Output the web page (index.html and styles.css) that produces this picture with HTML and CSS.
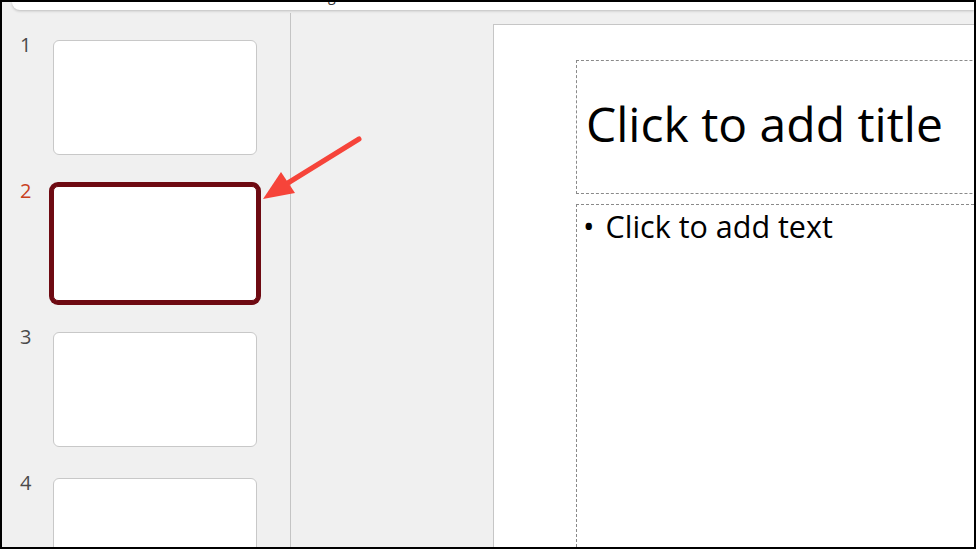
FILE: index.html
```html
<html>
<head>
<meta charset="utf-8">
<link rel="stylesheet" href="styles.css">
</head>
<body>
<div class="app">
  <div class="ribbon">
    <span class="ribbon-text">Recording</span>
  </div>
  <div class="workspace">
    <div class="thumbs">
      <div class="slide-row">
        <span class="num">1</span>
        <div class="thumb"></div>
      </div>
      <div class="slide-row active">
        <span class="num">2</span>
        <div class="thumb"></div>
      </div>
      <div class="slide-row">
        <span class="num">3</span>
        <div class="thumb"></div>
      </div>
      <div class="slide-row">
        <span class="num">4</span>
        <div class="thumb"></div>
      </div>
    </div>
    <div class="editor">
      <div class="slide">
        <div class="ph-title">Click to add title</div>
        <div class="ph-body">
          <p class="bullet">Click to add text</p>
        </div>
      </div>
    </div>
  </div>
</div>
<svg class="arrow" width="976" height="549" viewBox="0 0 976 549">
  <line x1="359" y1="139" x2="283" y2="186" stroke="#f6443a" stroke-width="5" stroke-linecap="round"/>
  <polygon points="263,199 281,172 295,193" fill="#f6443a"/>
</svg>
</body>
</html>
```

FILE: styles.css
```css
html, body
{
    margin: 0;
    padding: 0;
}
body
{
    background: #000;
    width: 976px;
    height: 549px;
    overflow: hidden;
    font-family: "Open Sans", "Liberation Sans", sans-serif;
}
.app
{
    margin: 2px;
    width: 972px;
    height: 545px;
    background: #f0f0f0;
    display: flex;
    flex-direction: column;
    overflow: hidden;
}
.ribbon
{
    height: 8px;
    margin-left: 10px;
    background: #fff;
    border-bottom-left-radius: 9px;
    box-shadow: 0 1px 3px rgba(0,0,0,.22);
    overflow: hidden;
    padding-left: 258px;
    flex: none;
    position: relative;
    z-index: 1;
}
.ribbon-text
{
    display: block;
    font-size: 14px;
    line-height: 14px;
    margin-top: -13px;
    color: #333;
}
.workspace
{
    flex: 1;
    display: flex;
    margin-top: 3px;
    min-height: 0;
}
.thumbs
{
    width: 288px;
    border-right: 1px solid #c4c4c4;
    padding-top: 27px;
    flex: none;
}
.slide-row
{
    display: flex;
    margin-bottom: 31px;
}
.num
{
    width: 33px;
    padding-left: 18px;
    font-size: 20px;
    line-height: 20px;
    margin-top: -5px;
    color: #4a4a4a;
}
.thumb
{
    width: 202px;
    height: 113px;
    background: #fff;
    border: 1px solid #c8c8c8;
    border-radius: 6px;
}
.active .num
{
    color: #c9401d;
}
.active .thumb
{
    border-color: #6e0a12;
    box-shadow: 0 0 0 4px #6e0a12;
    border-radius: 5px;
}
.editor
{
    flex: 1;
    padding: 11px 0 0 202px;
    overflow: hidden;
}
.slide
{
    width: 700px;
    height: 100%;
    background: #fff;
    border-top: 1px solid #c6c6c6;
    border-left: 1px solid #c6c6c6;
    padding: 35px 0 0 82px;
    box-sizing: border-box;
}
.ph-title
{
    width: 500px;
    height: 124px;
    border: 1px dashed #8a8a8a;
    display: flex;
    align-items: center;
    padding: 0 0 8px 9px;
    font-size: 48px;
    color: #000;
    box-sizing: content-box;
}
.ph-body
{
    width: 500px;
    height: 400px;
    margin-top: 10px;
    border: 1px dashed #8a8a8a;
    padding: 1px 0 0 6px;
}
.bullet
{
    margin: 0;
    font-size: 30.5px;
    line-height: 40px;
    color: #000;
}
.bullet::before
{
    content: "\2022";
    margin-right: 11px;
}
.arrow
{
    position: absolute;
    left: 0;
    top: 0;
}
```
